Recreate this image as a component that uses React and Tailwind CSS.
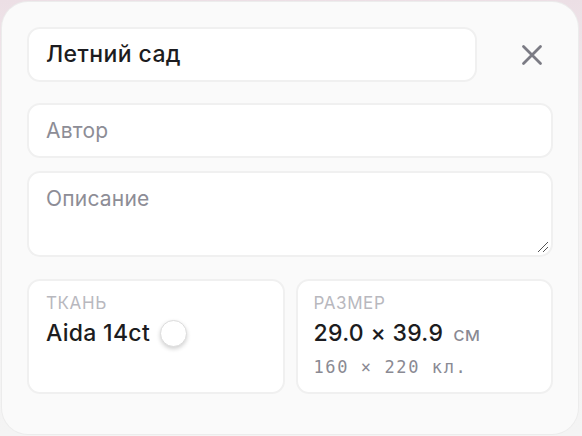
import React from "react";

const sans = { fontFamily: "Inter, 'Noto Sans', sans-serif" };

export default function App() {
  return (
    <div
      className="w-[582px] h-[436px] bg-[linear-gradient(180deg,#ecdfe5_0%,#f3f0f1_40%,#f4f4f4_100%)] p-[2px]"
      style={sans}
    >
      <div className="h-full w-[576px] rounded-[26px] bg-[#fafafa] shadow-[0_0_0_1px_#ececec] px-[25px] pt-[25px]">
        {/* title row */}
        <div className="flex items-center gap-[43px]">
          <div className="flex-1 h-[55px] rounded-[13px] border-2 border-[#f0f0f0] bg-white flex items-center px-[17px]">
            <span className="text-[23px] font-[450] text-[#1c1c20] tracking-[0.4px]">Летний сад</span>
          </div>
          <button className="w-[24px] h-[24px] flex items-center justify-center mr-[9px]">
            <svg width="22" height="22" viewBox="0 0 22 22" fill="none">
              <path d="M2.5 2.5L19.5 19.5M19.5 2.5L2.5 19.5" stroke="#7b7b84" strokeWidth="2.8" strokeLinecap="round" />
            </svg>
          </button>
        </div>

        {/* author */}
        <div className="mt-[21px] h-[55px] rounded-[13px] border-2 border-[#f0f0f0] bg-white flex items-center px-[17px]">
          <span className="text-[21px] text-[#8d8d96] tracking-[0.2px]">Автор</span>
        </div>

        {/* description */}
        <div className="relative mt-[13px] h-[86px] rounded-[13px] border-2 border-[#f0f0f0] bg-white px-[17px] pt-[10px]">
          <span className="text-[21px] text-[#8d8d96] tracking-[0.2px]">Описание</span>
          <svg className="absolute right-[2px] bottom-[2px]" width="13" height="13" viewBox="0 0 13 13">
            <path d="M12 2L2 12M12 7L7 12" stroke="#555" strokeWidth="1" />
          </svg>
        </div>

        {/* info cards */}
        <div className="mt-[22px] grid grid-cols-2 gap-[11px]">
          <div className="h-[115px] rounded-[13px] border-2 border-[#f0f0f0] bg-white px-[17px] pt-[11px]">
            <div className="text-[17px] tracking-[0.6px] text-[#b8b8be] leading-[22px]">ТКАНЬ</div>
            <div className="mt-[4px] flex items-center gap-[10px]">
              <span className="text-[23px] font-[450] text-[#1c1c20] tracking-[0.3px] leading-[30px]">Aida 14ct</span>
              <span className="w-[27px] h-[27px] rounded-full bg-white border border-[#dcdcdc] shadow-[0_2px_4px_rgba(0,0,0,0.18)]" />
            </div>
          </div>
          <div className="h-[115px] rounded-[13px] border-2 border-[#f0f0f0] bg-white px-[16px] pt-[11px]">
            <div className="text-[17px] tracking-[0.6px] text-[#b8b8be] leading-[22px]">РАЗМЕР</div>
            <div className="mt-[4px] flex items-baseline gap-[10px] leading-[30px]">
              <span className="text-[23px] font-[450] text-[#1c1c20] tracking-[0.3px]">29.0 × 39.9</span>
              <span className="text-[20px] text-[#8a8a93]">см</span>
            </div>
            <div
              className="mt-[6px] text-[17px] tracking-[1.6px] text-[#8a8a93]"
              style={{ fontFamily: "'DejaVu Sans Mono', 'Liberation Mono', monospace" }}
            >
              160 × 220 кл.
            </div>
          </div>
        </div>
      </div>
    </div>
  );
}
